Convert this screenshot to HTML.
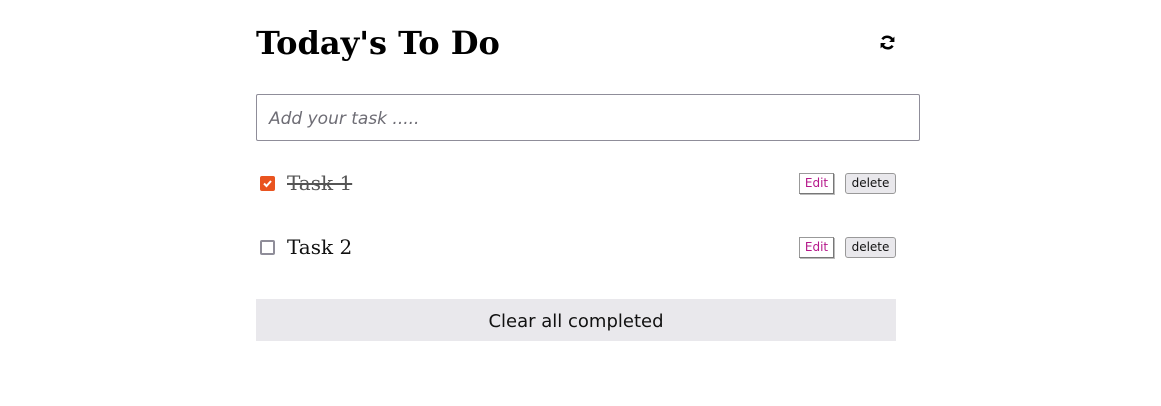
<!DOCTYPE html>
<html><head><meta charset="utf-8"><style>
body{margin:0;width:1161px;height:406px;background:#fff;position:relative;overflow:hidden;font-family:"DejaVu Sans","Liberation Sans",sans-serif}
.a{position:absolute}
h1{position:absolute;left:256px;top:24px;margin:0;font:bold 32px "DejaVu Serif",serif;color:#000;white-space:nowrap}
.inp{left:256px;top:94px;width:662px;height:45px;border:1px solid #8f8d99;border-radius:2px}
.ph{left:269px;top:109px;font-style:italic;font-size:17px;color:#6e6d75}
.cb{width:11px;height:11px;border:2px solid #8f8d99;border-radius:2px}
.cb.on{background:#e95420;border-color:#e95420}
.t{font:20px "DejaVu Serif",serif;color:#111;white-space:nowrap}
.edit{width:33px;height:19px;border:1px solid #999;border-right-color:#777;border-bottom-color:#777;background:#fff;color:#b5178a;font-size:12px;line-height:19px;text-align:center;box-shadow:1px 1px 0 #bbb}
.del{width:49px;height:19px;border:1px solid #999;border-radius:3px;background:#e9e8ec;color:#111;font-size:12px;line-height:19px;text-align:center}
.clr{left:256px;top:299px;width:640px;height:42px;background:#e9e8ec;font-size:18px;line-height:46px;text-align:center;color:#111}
</style></head><body>
<h1>Today's To Do</h1>
<svg class="a" style="left:879px;top:34px" width="17" height="17" viewBox="0 0 16 16"><path d="M13 6.5A5.5 5.5 0 0 0 3.2 5" fill="none" stroke="#000" stroke-width="2.4"/><path d="M9.5 7.5L14.5 7.5L14.5 2.5Z" fill="#000"/><path d="M3 9.5A5.5 5.5 0 0 0 12.8 11" fill="none" stroke="#000" stroke-width="2.4"/><path d="M6.5 8.5L1.5 8.5L1.5 13.5Z" fill="#000"/></svg>
<div class="a inp"></div>
<div class="a ph">Add your task .....</div>

<div class="a cb on" style="left:260px;top:176px"><svg width="11" height="11" viewBox="0 0 11 11" style="display:block"><path d="M2 5.5L4.5 8L9 3" fill="none" stroke="#fff" stroke-width="2"/></svg></div>
<div class="a t" style="left:287px;top:171px;text-decoration:line-through;color:#555">Task 1</div>
<div class="a edit" style="left:799px;top:173px">Edit</div>
<div class="a del" style="left:845px;top:173px">delete</div>

<div class="a cb" style="left:260px;top:240px"></div>
<div class="a t" style="left:287px;top:235px">Task 2</div>
<div class="a edit" style="left:799px;top:237px">Edit</div>
<div class="a del" style="left:845px;top:237px">delete</div>

<div class="a clr">Clear all completed</div>
</body></html>
